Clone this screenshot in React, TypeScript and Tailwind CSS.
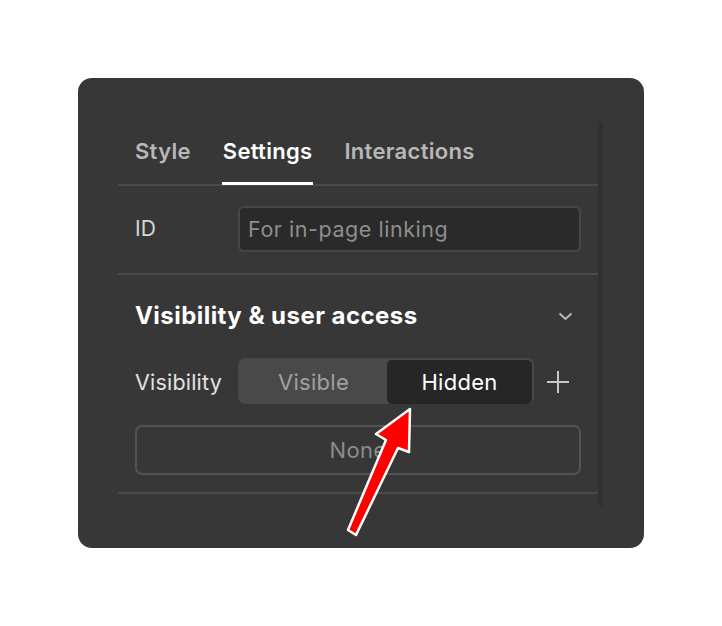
import React from "react";

export default function App() {
  return (
    <div className="w-[722px] h-[626px] bg-white relative" style={{ fontFamily: "Inter, 'Noto Sans', sans-serif" }}>
      <div className="absolute left-[78px] top-[78px] w-[566px] h-[470px] rounded-[14px] bg-[#373737] pt-[44px] pl-[40px] flex items-start">
        <div className="w-[480px] flex flex-col">
          {/* Tabs */}
          <div className="h-[64px] flex items-end gap-[32px] pl-[17px] border-b-2 border-[#4a4a4a]">
            <div className="h-full flex flex-col justify-end">
              <span className="text-[22px] tracking-[0.3px] font-semibold text-[#b8b8b8] leading-none pb-[22px]">Style</span>
            </div>
            <div className="h-full flex flex-col justify-end relative">
              <span className="text-[22px] tracking-[0.3px] font-semibold text-white leading-none pb-[22px]">Settings</span>
              <div className="absolute left-[-1px] right-[-1px] bottom-[-1px] h-[3px] bg-white" />
            </div>
            <div className="h-full flex flex-col justify-end">
              <span className="text-[22px] tracking-[0.3px] font-semibold text-[#b8b8b8] leading-none pb-[22px]">Interactions</span>
            </div>
          </div>
          {/* ID row */}
          <div className="flex items-center pl-[17px] pr-[17px] pt-[20px] pb-[21px] border-b-2 border-[#4a4a4a]">
            <span className="w-[103px] text-[21px] text-[#d8d8d8]">ID</span>
            <div className="flex-1 h-[46px] rounded-[6px] bg-[#2a2a2a] border-2 border-[#474747] flex items-center px-[8px]">
              <span className="text-[21.5px] tracking-[0.55px] text-[#8e8e8e]">For in-page linking</span>
            </div>
          </div>
          {/* Visibility section */}
          <div className="pl-[17px] pr-[17px] pt-[27px] pb-[17px] border-b-2 border-[#4a4a4a]">
            <div className="flex items-center justify-between h-[28px]">
              <span className="text-[24px] tracking-[0.45px] font-bold text-white">Visibility &amp; user access</span>
              <svg width="15" height="9" viewBox="0 0 15 9" className="mr-[8px]">
                <path d="M1.5 1.5 L7.5 7 L13.5 1.5" fill="none" stroke="#b8b8b8" strokeWidth="2" />
              </svg>
            </div>
            <div className="flex items-center mt-[28px]">
              <span className="w-[103px] text-[21.5px] tracking-[0.2px] text-[#e2e2e2]">Visibility</span>
              <div className="w-[296px] h-[48px] rounded-[7px] bg-[#494949] flex items-center p-[2px] shadow-[inset_0_-2px_0_rgba(0,0,0,0.25)]">
                <div className="w-[147px] h-full flex items-center justify-center text-[22px] tracking-[0.3px] text-[#a0a0a0]">Visible</div>
                <div className="flex-1 h-full rounded-[5px] bg-[#262626] flex items-center justify-center text-[22px] tracking-[0.3px] text-white">Hidden</div>
              </div>
              <svg width="24" height="24" viewBox="0 0 24 24" className="ml-[12px]">
                <path d="M12 1 V23 M1 12 H23" fill="none" stroke="#c8c8c8" strokeWidth="2" />
              </svg>
            </div>
            <div className="mt-[19px] h-[50px] rounded-[7px] border-2 border-[#535353] flex items-center justify-center text-[22px] tracking-[0.3px] text-[#8c8c8c]">
              None
            </div>
          </div>
        </div>
        <div className="w-[5px] h-[384px] bg-[#313131]" />
      </div>
      {/* Arrow annotation */}
      <svg className="absolute left-0 top-0" width="722" height="626" viewBox="0 0 722 626">
        <polygon
          points="410,409 376,434 386,440 348,530 356,535 398,448 409,452"
          fill="#ff0000"
          stroke="#ffffff"
          strokeWidth="2.5"
          strokeLinejoin="round"
        />
      </svg>
    </div>
  );
}
